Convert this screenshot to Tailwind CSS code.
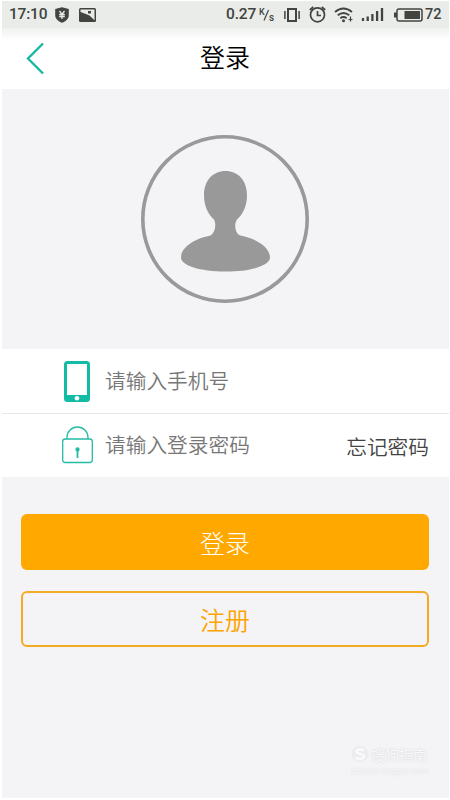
<!DOCTYPE html>
<html lang="zh-CN">
<head>
<meta charset="utf-8">
<title>登录</title>
<script src="https://cdn.jsdelivr.net/npm/@tailwindcss/browser@4"></script>
</head>
<body class="bg-white">
<div class="relative flex h-[800px] w-[450px] flex-col overflow-hidden border-b-2 border-l-2 border-r border-t border-white bg-[#f4f3f6] font-['Noto_Sans_CJK_SC',sans-serif] font-[350]">
  <header class="h-[88px] shrink-0 bg-white">
    <div class="flex h-[27px] items-center bg-[#e9ece8] pl-[7px] pr-[7px] font-[Roboto,sans-serif] text-[15.500px] font-medium text-[#41443f]">
      <span class="w-[37px] whitespace-nowrap tracking-[-0.2px]">17:10</span>
      <svg class="ml-[9px] h-4 w-[14px] shrink-0" viewBox="0 0 14 16"><path fill="#41443f" d="M7 .2 13.8 2v6c0 4-3 6.300-6.800 7.800C3.200 14.300.2 12 .2 8V2z"/><path fill="none" stroke="#e9ece8" stroke-width="1.300" d="m4.500 4 2.500 3.200L9.500 4M4.200 7.500h5.600M4.200 9.500h5.600M7 7v5"/></svg>
      <svg class="ml-[10px] h-[14px] w-[17px] shrink-0" viewBox="0 0 17 14"><rect width="17" height="14" rx="1.500" fill="#41443f"/><path fill="#e9ece8" d="M1.500 1.500h14v10.800L10.500 7.500 7.500 6.300 1.500 4z"/><path fill="#41443f" d="M9 3h3v2.500H9z"/></svg>
      <span class="ml-auto whitespace-nowrap tracking-[-0.2px]">0.27</span>
      <svg class="ml-[3px] h-4 w-[17px] shrink-0" viewBox="0 0 17 16"><g fill="#41443f" font-family="Roboto" font-size="9" font-weight="500"><text x="0" y="7.500">K</text><text x="10" y="14" font-size="10">s</text></g><path stroke="#41443f" stroke-width="1.200" d="M5 13.500 9.500 3"/></svg>
      <svg class="ml-2 h-4 w-4 shrink-0" viewBox="0 0 16 16" fill="none" stroke="#41443f"><rect x="4" y="2" width="8" height="12" stroke-width="2"/><path stroke-width="1.500" d="M.9 4v8M15.100 4v8"/></svg>
      <svg class="ml-[9px] h-[17px] w-[17px] shrink-0" viewBox="0 0 17 17" fill="none" stroke="#41443f" stroke-width="1.700"><circle cx="8.500" cy="8.800" r="7"/><path d="M8.500 5v4.500H12M.8 4 4.200 1M16.200 4l-3.400-3"/></svg>
      <svg class="ml-2 h-4 w-[20px] shrink-0" viewBox="0 0 20 16" fill="none" stroke="#41443f" stroke-width="1.800"><path d="M1 5q8.500-7 17 0M3.700 8.300q5.800-4.600 11.600 0M6.300 11.200q3.200-2.400 6.400 0"/><circle cx="9.500" cy="13.700" r="1.500" fill="#41443f" stroke="none"/><path stroke-width="1.200" d="M16.500 9.500v5M14.500 12.500h4"/></svg>
      <svg class="ml-[7px] h-[15px] w-[24px] shrink-0" viewBox="0 0 24 15" stroke="#41443f" stroke-width="2.300"><path d="M2 14v-3M6.700 14V9.500M11.400 14V7M16.100 14V4M21 14V1"/></svg>
      <svg class="ml-[9px] h-[14px] w-[29px] shrink-0" viewBox="0 0 29 14"><rect x="3" y="1" width="25" height="12" rx="2" fill="none" stroke="#41443f" stroke-width="1.500"/><path fill="#41443f" d="M0 4.500h3v5H0zM10.500 3h15.500v8H10.500z"/></svg>
      <span class="ml-[2px] w-[17px] whitespace-nowrap text-[14.500px]">72</span>
    </div>
    <div class="relative flex h-[61px] items-center justify-center bg-linear-to-b from-[#eff1ee] to-white to-20%">
      <svg class="absolute left-[24px] top-[14px] h-[33px] w-[20px]" viewBox="0 0 20 33" fill="none" stroke="#12b8a0" stroke-width="2.300"><path d="M17 1.500 2 16.500l15 15"/></svg>
      <h1 class="pb-[4px] pr-[1px] text-[25px] font-[350] leading-none text-black">登录</h1>
    </div>
  </header>
  <section class="flex h-[260px] shrink-0 items-center justify-center pr-[2px]">
    <svg class="h-[168px] w-[168px]" viewBox="0 0 168 168"><circle cx="84" cy="84" r="82.200" fill="none" stroke="#999" stroke-width="3.600"/><path fill="#999" d="M84.500 36C97 36 106 45.500 106 60c0 11-4 19-9.500 24-4 4-2.500 15 3 16.500C117 104 129 113 129 122.500c0 8-19 14-44.500 14s-44.500-6-44.500-14C40 113 52 104 69.500 100.500 74 98 76 88.500 72.500 84 67 79 63 71 63 60c0-14.500 9-24 21.500-24z"/></svg>
  </section>
  <form class="h-[128px] shrink-0 bg-white">
    <div class="flex h-[65px] items-center border-b border-[#e8e7ea] pl-[62px]">
      <svg class="h-[41px] w-[26px]" viewBox="0 0 26 41"><path fill="#12bba3" fill-rule="evenodd" d="M3.500 0h19A3.500 3.500 0 0 1 26 3.500v34a3.500 3.500 0 0 1-3.500 3.500h-19A3.500 3.500 0 0 1 0 37.500v-34A3.500 3.500 0 0 1 3.500 0zM3 3v31h20V3z"/><circle cx="13" cy="37.200" r="2.300" fill="#fff"/></svg>
      <span class="ml-[15px] pb-[2px] text-[20.700px] leading-none text-[#777]">请输入手机号</span>
    </div>
    <div class="flex h-[63px] items-center pl-[60px] pr-[20px]">
      <svg class="mb-[2px] h-[38px] w-[31px]" viewBox="0 0 31 38" fill="none" stroke="#25bba5" stroke-width="1.300"><rect x=".7" y="13" width="29.600" height="23.500" rx="2.500"/><path d="M5 13v-1.500a10.500 10.500 0 0 1 21 0V13"/><path stroke-width="1.800" d="M15.500 24v8"/><circle cx="15.500" cy="23.500" r="1.500" fill="#18b59c"/></svg>
      <span class="ml-[12px] pb-[2px] text-[20.700px] leading-none text-[#777]">请输入登录密码</span>
      <a class="ml-auto pt-[2px] text-[20.700px] leading-none text-[#444]">忘记密码</a>
    </div>
  </form>
  <div class="flex flex-col gap-[21px] px-[19px] pt-[37px]">
    <button type="button" class="h-[56px] w-[408px] rounded-[6px] bg-[#ffa800] text-[25px] font-light leading-none text-white">登录</button>
    <button type="button" class="h-[56px] w-[408px] rounded-[6px] border-2 border-[#f5aa24] text-[25px] leading-none text-[#fca500]">注册</button>
  </div>
  <div class="absolute bottom-[22px] right-[21px] w-[77px] text-[#f8f7fa]">
    <div class="flex items-center gap-[2px]">
      <svg class="h-[18px] w-[18px] shrink-0" viewBox="0 0 18 18" fill="none"><circle cx="9" cy="9" r="8.500" fill="#edecef"/><path stroke="#fcfcfd" stroke-width="2" d="M13 5.500C11 4 5.500 4 5.500 6.700S13 8.500 13 11.300 7 14.500 4.500 12.500"/></svg>
      <span class="whitespace-nowrap text-[14px] font-normal leading-none [text-shadow:0_0_2px_#d2d1d6]">搜狗指南</span>
    </div>
    <div class="mt-[2px] whitespace-nowrap font-['Liberation_Sans',sans-serif] text-[9.500px] font-normal leading-[11px] [text-shadow:0_0_2px_#d2d1d6]">zhinan.sogou.com</div>
  </div>
</div>
</body>
</html>
